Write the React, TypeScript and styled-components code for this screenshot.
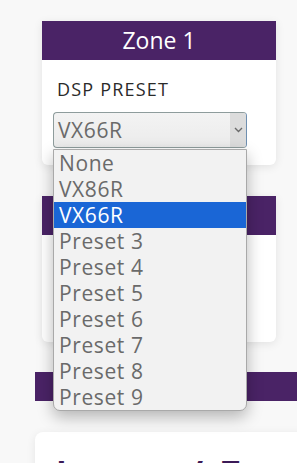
import * as React from "react";
import styled, { createGlobalStyle } from "styled-components";

const GlobalStyle = createGlobalStyle`
  html, body {
    margin: 0;
    padding: 0;
    background: #f8f8f8;
    overflow: hidden;
  }
  body {
    font-family: "Open Sans", "Noto Sans", sans-serif;
  }
`;

const Page = styled.div`
  width: 297px;
  height: 463px;
  padding: 21px 0 0 35px;
  box-sizing: border-box;
  overflow: hidden;
`;

const ZoneList = styled.div`
  display: flex;
  flex-direction: column;
  gap: 31px;
  width: 234px;
  margin-left: 7px;
`;

const Card = styled.section<{ $raised?: boolean }>`
  position: relative;
  z-index: ${(p) => (p.$raised ? 2 : 1)};
  background: #ffffff;
  border-radius: 0 0 6px 6px;
  box-shadow: 0 2px 10px rgba(0, 0, 0, 0.09);
`;

const CardHeader = styled.div`
  height: 39px;
  background: #4a2366;
  color: #ffffff;
  font-size: 23px;
  line-height: 39px;
  text-align: center;
`;

const CardBody = styled.div<{ $bottom: number }>`
  padding: 18px 29px ${(p) => p.$bottom}px 11px;
  display: flex;
  flex-direction: column;
  gap: 12px;
`;

const Label = styled.div`
  padding-left: 4px;
  font-size: 18px;
  line-height: 22px;
  color: #2a2a2a;
  letter-spacing: 1.2px;
`;

const SelectWrap = styled.div`
  position: relative;
`;

const SelectBox = styled.div`
  height: 36px;
  box-sizing: border-box;
  display: flex;
  align-items: stretch;
  border: 1px solid #8e9c9c;
  border-right-color: #6f8fb0;
  border-radius: 4px;
  background: linear-gradient(#f3f3f3, #ebebeb);
  overflow: hidden;
`;

const SelectValue = styled.div`
  flex: 1;
  padding-left: 4px;
  font-size: 21px;
  line-height: 34px;
  color: #6a6a6a;
  letter-spacing: 0.6px;
`;

const ArrowBtn = styled.div`
  width: 16px;
  background: #dcdcdc;
  display: flex;
  align-items: center;
  justify-content: center;
`;

const Dropdown = styled.ul`
  position: absolute;
  top: calc(100% + 1px);
  left: 0;
  right: 0;
  margin: 0;
  padding: 0;
  list-style: none;
  background: #f2f2f2;
  border: 1px solid #a9a9a9;
  border-radius: 0 0 7px 7px;
  box-shadow: 0 6px 16px rgba(0, 0, 0, 0.28);
  z-index: 5;
`;

const Option = styled.li<{ $active?: boolean }>`
  height: 26px;
  padding-left: 5px;
  font-size: 21px;
  line-height: 26px;
  letter-spacing: 0.6px;
  white-space: nowrap;
  color: ${(p) => (p.$active ? "#ffffff" : "#6a6a6a")};
  background: ${(p) => (p.$active ? "#1a66d6" : "transparent")};
`;

const SectionBar = styled.div`
  margin-top: 30px;
  width: 280px;
  height: 29px;
  background: #4a2366;
`;

const SectionCard = styled.section`
  margin-top: 31px;
  width: 280px;
  height: 80px;
  background: #ffffff;
  border-radius: 8px;
  box-shadow: 0 2px 10px rgba(0, 0, 0, 0.08);
  padding: 22px 0 0 20px;
  box-sizing: border-box;
`;

const SectionTitle = styled.h2`
  margin: 0;
  font-size: 42px;
  line-height: 42px;
  font-weight: 600;
  color: #3b1a57;
  letter-spacing: 2px;
  white-space: nowrap;
`;

const presets = ["None", "VX86R", "VX66R", "Preset 3", "Preset 4", "Preset 5", "Preset 6", "Preset 7", "Preset 8", "Preset 9"];

function Chevron() {
  return (
    <svg width="9" height="6" viewBox="0 0 9 6">
      <path d="M1 1l3.5 3.5L8 1" fill="none" stroke="#6a6a6a" strokeWidth="1.4" />
    </svg>
  );
}

function PresetSelect({ value, open }: { value: string; open?: boolean }) {
  return (
    <SelectWrap>
      <SelectBox>
        <SelectValue>{value}</SelectValue>
        <ArrowBtn>
          <Chevron />
        </ArrowBtn>
      </SelectBox>
      {open && (
        <Dropdown>
          {presets.map((p) => (
            <Option key={p} $active={p === value}>
              {p}
            </Option>
          ))}
        </Dropdown>
      )}
    </SelectWrap>
  );
}

function ZoneCard({ name, value, open, bottom }: { name: string; value: string; open?: boolean; bottom: number }) {
  return (
    <Card $raised={open}>
      <CardHeader>{name}</CardHeader>
      <CardBody $bottom={bottom}>
        <Label>DSP PRESET</Label>
        <PresetSelect value={value} open={open} />
      </CardBody>
    </Card>
  );
}

export default function App() {
  return (
    <>
      <GlobalStyle />
      <Page>
        <ZoneList>
          <ZoneCard name="Zone 1" value="VX66R" open bottom={17} />
          <ZoneCard name="Zone 2" value="None" bottom={19} />
        </ZoneList>
        <SectionBar />
        <SectionCard>
          <SectionTitle>Input / Format</SectionTitle>
        </SectionCard>
      </Page>
    </>
  );
}
